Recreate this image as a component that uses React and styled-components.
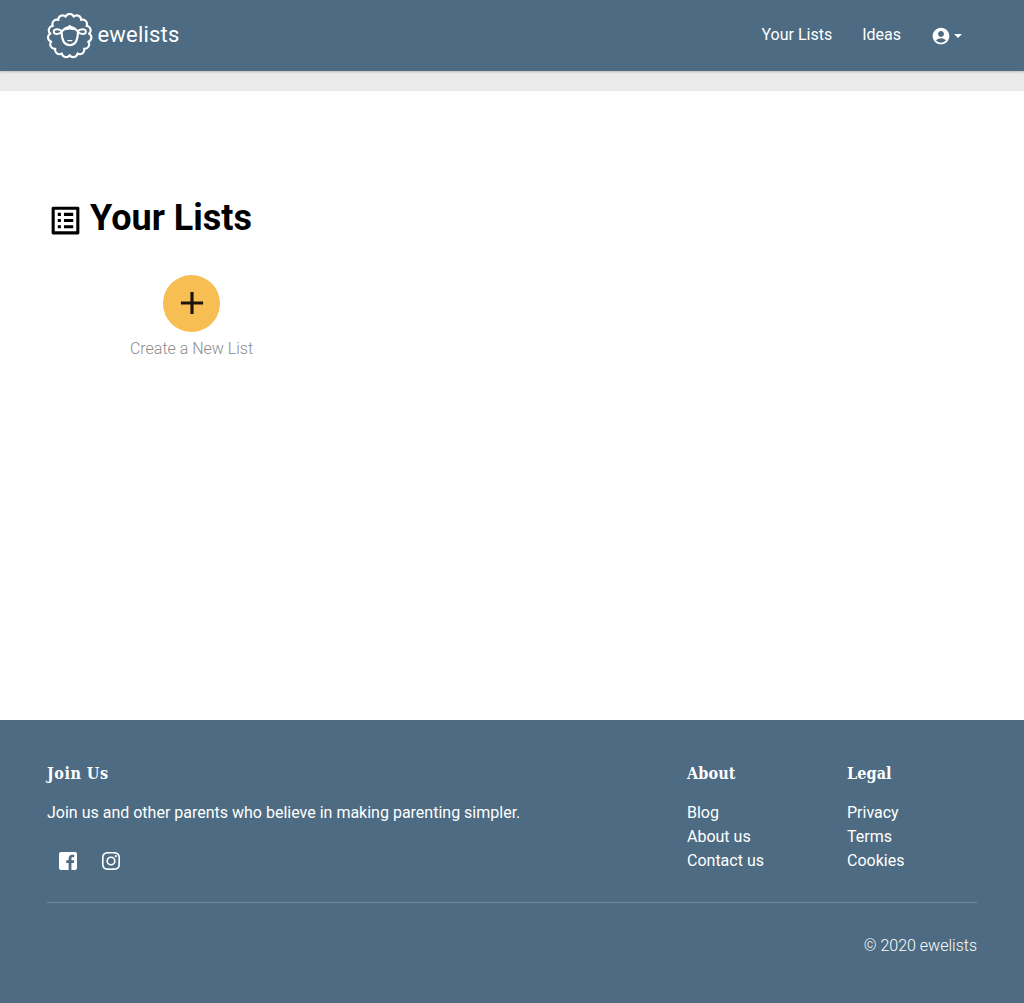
import React from "react";
import styled, { createGlobalStyle } from "styled-components";
import { MdAccountCircle, MdListAlt, MdAdd } from "react-icons/md";
import { SiInstagram } from "react-icons/si";

const GlobalStyle = createGlobalStyle`
  * { box-sizing: border-box; }
  body {
    margin: 0;
    background: #fff;
    color: #000;
    font-family: Roboto, "Liberation Sans", sans-serif;
    font-size: 16px;
    line-height: 24px;
  }
  a { color: inherit; text-decoration: none; }
`;

const Page = styled.div`
  display: flex;
  flex-direction: column;
  min-height: 1003px;
`;

const Header = styled.header`
  position: relative;
  display: flex;
  align-items: center;
  justify-content: space-between;
  height: 71px;
  padding: 0 62px 0 47px;
  background: #4d6b82;
  color: #fff;
  box-shadow: 0 1px 2px rgba(0, 0, 0, 0.2);
`;

const Brand = styled.a`
  display: flex;
  align-items: center;
  gap: 4.5px;
  font-size: 22px;
  line-height: 28px;
  letter-spacing: 0.2px;
`;

const BrandName = styled.span`
  margin-top: -2px;
`;

const Nav = styled.nav`
  display: flex;
  align-items: center;
  gap: 30px;
  margin-top: -1px;
`;

const AccountButton = styled.a`
  display: flex;
  align-items: center;
  gap: 3px;
  margin-top: 2px;
  svg { display: block; }
`;

const Caret = styled.span`
  border-top: 4px solid #fff;
  border-left: 4px solid transparent;
  border-right: 4px solid transparent;
`;

const Breadcrumb = styled.div`
  height: 20px;
  background: #eaeaea;
`;

const Main = styled.main`
  flex: 1;
  padding: 103px 47px 0;
`;

const Title = styled.h1`
  display: flex;
  align-items: center;
  gap: 6px;
  margin: 0;
  font-size: 36px;
  line-height: 48px;
  font-weight: 700;
  svg { display: block; margin: 5px 0 0; }
`;

const CreateList = styled.div`
  display: flex;
  flex-direction: column;
  align-items: center;
  width: 289px;
  margin-top: 33px;
  color: #8c8c8c;
  font-weight: 300;
`;

const AddButton = styled.button`
  display: flex;
  align-items: center;
  justify-content: center;
  width: 57px;
  height: 57px;
  margin-bottom: 5px;
  padding: 0 0 1px 1px;
  border: 0;
  border-radius: 50%;
  background: #f7bf53;
  color: #1c1508;
`;

const Footer = styled.footer`
  height: 283px;
  padding: 41px 47px 0;
  background: #4d6b82;
  color: #fff;
`;

const Columns = styled.div`
  display: grid;
  grid-template-columns: 640px 160px 1fr;
  height: 142px;
  border-bottom: 1px solid #71899b;
`;

const Heading = styled.h4`
  margin: 0 0 15px;
  padding-top: 1px;
  font-family: "Roboto Slab", "DejaVu Serif Condensed", "DejaVu Serif", serif;
  font-size: 16px;
  line-height: 24px;
  font-weight: 700;
  letter-spacing: ${({ $tracking }) => $tracking || "0.1px"};
`;

const Text = styled.p`
  margin: 0;
`;

const Links = styled.div`
  display: flex;
  flex-direction: column;
`;

const Socials = styled.div`
  display: flex;
  gap: 25px;
  margin: 26.5px 0 0 12.3px;
  svg { display: block; }
`;

const Copyright = styled.p`
  margin: 31px 0 0;
  text-align: right;
  font-weight: 300;
`;

const BUMPS = 15;
const fleecePoint = (i) => {
  const a = ((i - 0.5) / BUMPS) * Math.PI * 2 - Math.PI / 2;
  return `${(22.7 + 19.4 * Math.cos(a)).toFixed(2)} ${(22.7 + 19.4 * Math.sin(a)).toFixed(2)}`;
};
const fleece =
  `M${fleecePoint(0)}` +
  Array.from({ length: BUMPS }, (_, i) => `A4.3 4.3 0 0 1 ${fleecePoint(i + 1)}`).join("") +
  "Z";

function SheepLogo() {
  return (
    <svg width="46" height="46" viewBox="0 0 46 46" fill="none" stroke="#fff" strokeWidth="2.1" strokeLinecap="round" strokeLinejoin="round">
      <path d={fleece} />
      <path d="M15 18.4C13 15.6 6.9 15.4 6.7 18.6C7.1 22.2 12.5 21.6 15 18.4C16.5 16.2 17.5 15 19.5 14.7M30.6 18.4C32.6 15.6 38.7 15.4 38.9 18.6C38.5 22.2 33.1 21.6 30.6 18.4C29.1 16.2 28.1 15 26.1 14.7" strokeWidth="1.9" />
      <path d="M14.6 19C14.8 27 17 32.2 22.8 32.2S30.8 27 31 19" />
      <path d="M17.2 16.8Q18.6 13.4 20.6 13.9Q22.8 11 25 13.9Q27 13.4 28.4 16.8Q22.8 15.4 17.2 16.8Z" fill="#fff" strokeWidth="1" />
      <path d="M20.8 27.6H24.8" strokeWidth="1.4" />
    </svg>
  );
}

function FacebookIcon() {
  return (
    <svg width="18" height="18" viewBox="3 3 18 18" fill="#fff">
      <path d="M19 3H5a2 2 0 0 0-2 2v14a2 2 0 0 0 2 2h7.615v-6.96h-2.338v-2.725h2.338v-2c0-2.325 1.42-3.592 3.5-3.592.699-.002 1.399.034 2.095.107v2.42h-1.435c-1.128 0-1.348.538-1.348 1.325v1.735h2.697l-.35 2.725h-2.348V21H19a2 2 0 0 0 2-2V5a2 2 0 0 0-2-2z" />
    </svg>
  );
}

function LinkColumn({ title, items }) {
  return (
    <Links>
      <Heading>{title}</Heading>
      {items.map((item) => (
        <a key={item} href="#">{item}</a>
      ))}
    </Links>
  );
}

export default function App() {
  return (
    <Page>
      <GlobalStyle />
      <Header>
        <Brand href="#">
          <SheepLogo />
          <BrandName>ewelists</BrandName>
        </Brand>
        <Nav>
          <a href="#">Your Lists</a>
          <a href="#">Ideas</a>
          <AccountButton href="#" aria-label="Account">
            <MdAccountCircle size={20} />
            <Caret />
          </AccountButton>
        </Nav>
      </Header>
      <Breadcrumb />
      <Main>
        <Title>
          <MdListAlt size={37} />
          Your Lists
        </Title>
        <CreateList>
          <AddButton aria-label="Create a New List">
            <MdAdd size={38} />
          </AddButton>
          Create a New List
        </CreateList>
      </Main>
      <Footer>
        <Columns>
          <div>
            <Heading $tracking="0.5px">Join Us</Heading>
            <Text>Join us and other parents who believe in making parenting simpler.</Text>
            <Socials>
              <FacebookIcon />
              <SiInstagram size={18} />
            </Socials>
          </div>
          <LinkColumn title="About" items={["Blog", "About us", "Contact us"]} />
          <LinkColumn title="Legal" items={["Privacy", "Terms", "Cookies"]} />
        </Columns>
        <Copyright>© 2020 ewelists</Copyright>
      </Footer>
    </Page>
  );
}
